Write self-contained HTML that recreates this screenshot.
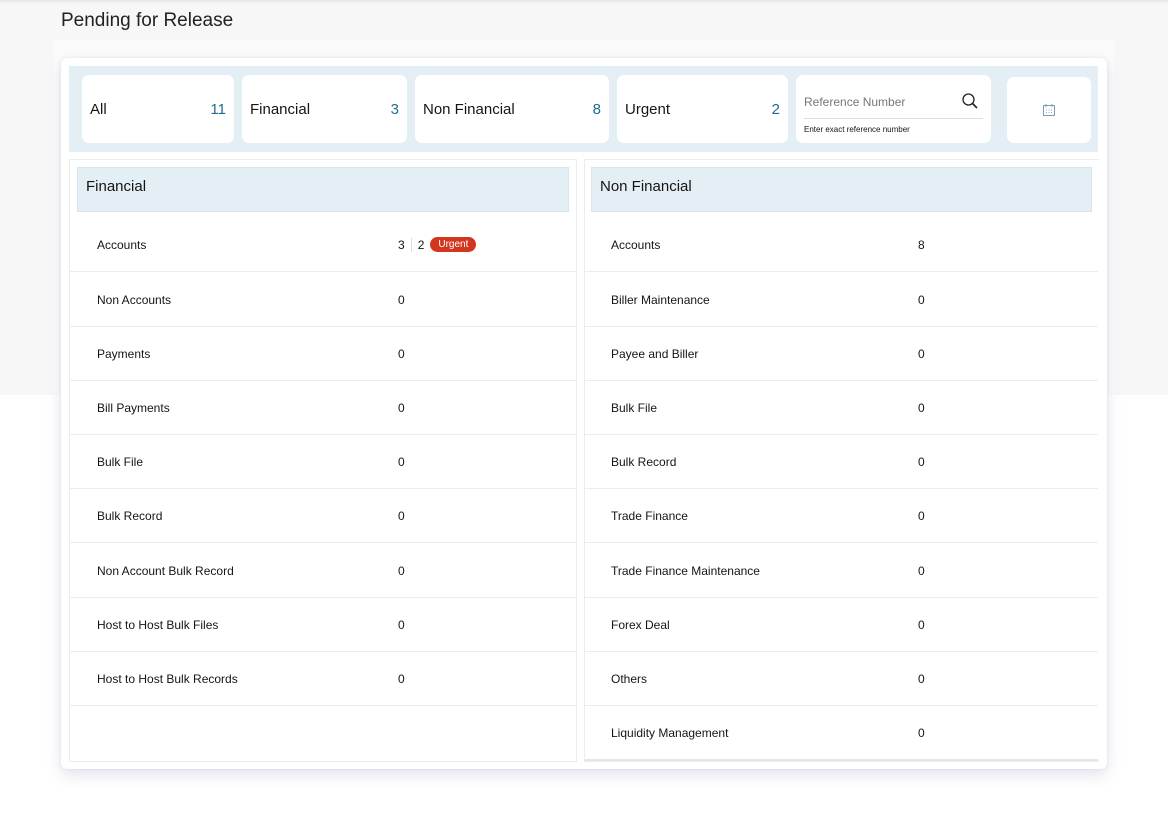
<!DOCTYPE html>
<html><head><meta charset="utf-8"><style>
*{box-sizing:border-box;margin:0;padding:0}
body{width:1168px;height:822px;background:#fff;font-family:"Liberation Sans",sans-serif;color:#161513;position:relative;overflow:hidden}
.topbg{position:absolute;left:0;top:0;width:1168px;height:395px;background:#f7f7f8}
.topline{position:absolute;left:0;top:0;width:1168px;height:4px;background:linear-gradient(#e4e3ec,#f7f7f8)}
.inner{position:absolute;left:53px;top:40px;width:1062px;height:355px;background:#fbfbfb}
h1{position:absolute;left:61px;top:10px;font-size:19px;font-weight:normal;color:#222}
.card{position:absolute;left:61px;top:58px;width:1046px;height:711px;background:#fff;border-radius:6px;box-shadow:0 6px 16px rgba(120,110,170,.2),0 0 3px rgba(0,0,0,.08)}
.bar{position:absolute;left:69px;top:66px;width:1029px;height:86px;background:#e3eff5}
.tile{position:absolute;top:75px;height:68px;background:#fff;border-radius:7px;font-size:15px;display:flex;align-items:center;justify-content:space-between;padding:0 8px}
.tile b{font-weight:normal;color:#1c6d91}
.panel{position:absolute;top:159px;height:603px;border:1px solid #ececec}
.hdr{position:absolute;top:167px;height:45px;background:#e3eff5;border:1px solid #d5e6ef;font-size:15px;padding:10px 8px}
.row{position:absolute;height:54px;border-bottom:1px solid #ececec;font-size:12px;display:flex;align-items:center}
.row span{position:absolute}
.urg{background:#d3361f;color:#fff;font-size:10px;border-radius:8px;padding:2px 8px;margin-left:6px}
</style></head><body>
<div class="topbg"></div><div class="topline"></div><div class="inner"></div>
<h1>Pending for Release</h1>
<div class="card"></div>
<div class="bar"></div>
<div class="tile" style="left:82px;width:152px">All<b>11</b></div>
<div class="tile" style="left:242px;width:165px">Financial<b>3</b></div>
<div class="tile" style="left:415px;width:194px">Non Financial<b>8</b></div>
<div class="tile" style="left:617px;width:171px">Urgent<b>2</b></div>
<div class="tile" style="left:796px;width:195px;display:block;padding:0 8px">
 <div style="margin-top:20px;font-size:12px;color:#777;height:24px;border-bottom:1px solid #ddd;position:relative">Reference Number
 <svg style="position:absolute;right:4px;top:-3px" width="18" height="18" viewBox="0 0 18 18"><circle cx="7.5" cy="7.5" r="5.5" fill="none" stroke="#222" stroke-width="1.3"/><path d="M11.5 11.5L16 16" stroke="#222" stroke-width="1.6"/></svg></div>
 <div style="font-size:8px;margin-top:6px">Enter exact reference number</div>
</div>
<div class="tile" style="left:1007px;top:77px;height:66px;width:84px;justify-content:center">
 <svg width="14" height="14" viewBox="0 0 14 14"><rect x="1.5" y="2.5" width="11" height="10" fill="none" stroke="#7a9fb5" stroke-width="1"/><path d="M4 1v3M10 1v3" stroke="#7a9fb5"/><path d="M4 7h1M6.5 7h1M9 7h1M4 9.5h1M6.5 9.5h1M9 9.5h1" stroke="#9ab"/></svg></div>

<div class="panel" style="left:69px;width:508px"></div>
<div class="hdr" style="left:77px;width:492px">Financial</div>
<div class="panel" style="left:584px;width:515px;border-right:none"></div>
<div class="hdr" style="left:591px;width:501px">Non Financial</div>

<div class="row" style="left:70px;width:506px;top:218px"><span style="left:27px">Accounts</span><span style="left:328px;display:flex;align-items:center">3<i style="display:inline-block;width:1px;height:14px;background:#ddd;margin:0 6px"></i>2<em class="urg" style="font-style:normal">Urgent</em></span></div>
<div class="row" style="left:70px;width:506px;top:273px"><span style="left:27px">Non Accounts</span><span style="left:328px">0</span></div>
<div class="row" style="left:70px;width:506px;top:327px"><span style="left:27px">Payments</span><span style="left:328px">0</span></div>
<div class="row" style="left:70px;width:506px;top:381px"><span style="left:27px">Bill Payments</span><span style="left:328px">0</span></div>
<div class="row" style="left:70px;width:506px;top:435px"><span style="left:27px">Bulk File</span><span style="left:328px">0</span></div>
<div class="row" style="left:70px;width:506px;top:489px"><span style="left:27px">Bulk Record</span><span style="left:328px">0</span></div>
<div class="row" style="left:70px;width:506px;top:544px"><span style="left:27px">Non Account Bulk Record</span><span style="left:328px">0</span></div>
<div class="row" style="left:70px;width:506px;top:598px"><span style="left:27px">Host to Host Bulk Files</span><span style="left:328px">0</span></div>
<div class="row" style="left:70px;width:506px;top:652px"><span style="left:27px">Host to Host Bulk Records</span><span style="left:328px">0</span></div>

<div class="row" style="left:585px;width:513px;top:218px"><span style="left:26px">Accounts</span><span style="left:333px">8</span></div>
<div class="row" style="left:585px;width:513px;top:273px"><span style="left:26px">Biller Maintenance</span><span style="left:333px">0</span></div>
<div class="row" style="left:585px;width:513px;top:327px"><span style="left:26px">Payee and Biller</span><span style="left:333px">0</span></div>
<div class="row" style="left:585px;width:513px;top:381px"><span style="left:26px">Bulk File</span><span style="left:333px">0</span></div>
<div class="row" style="left:585px;width:513px;top:435px"><span style="left:26px">Bulk Record</span><span style="left:333px">0</span></div>
<div class="row" style="left:585px;width:513px;top:489px"><span style="left:26px">Trade Finance</span><span style="left:333px">0</span></div>
<div class="row" style="left:585px;width:513px;top:544px"><span style="left:26px">Trade Finance Maintenance</span><span style="left:333px">0</span></div>
<div class="row" style="left:585px;width:513px;top:598px"><span style="left:26px">Forex Deal</span><span style="left:333px">0</span></div>
<div class="row" style="left:585px;width:513px;top:652px"><span style="left:26px">Others</span><span style="left:333px">0</span></div>
<div class="row" style="left:585px;width:513px;top:707px;border-bottom:2px solid #e6e6e6"><span style="left:26px">Liquidity Management</span><span style="left:333px">0</span></div>
</body></html>
